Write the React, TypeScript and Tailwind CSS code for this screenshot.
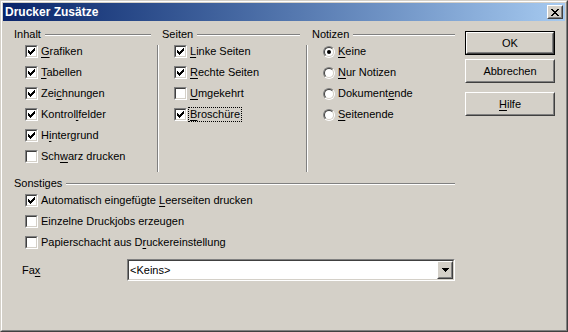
import React from 'react';

const raised =
  'border border-t-white border-l-white border-r-[#404040] border-b-[#404040]';
const raisedInner =
  'border border-t-[#d4d0c8] border-l-[#d4d0c8] border-r-[#808080] border-b-[#808080]';
const sunken =
  'border border-t-[#808080] border-l-[#808080] border-r-white border-b-white';
const sunkenInner =
  'border border-t-[#404040] border-l-[#404040] border-r-[#d4d0c8] border-b-[#d4d0c8]';

// text with one underlined accelerator letter
function Acc({ t, u }: { t: string; u?: number }) {
  if (u === undefined) return <>{t}</>;
  return (
    <>
      {t.slice(0, u)}
      <span className="underline underline-offset-[2px]">{t[u]}</span>
      {t.slice(u + 1)}
    </>
  );
}

const tick = [
  [6], [5, 6], [0, 4, 5, 6], [0, 1, 3, 4, 5], [0, 1, 2, 3, 4], [1, 2, 3], [2],
];

function CheckBox({ checked }: { checked: boolean }) {
  return (
    <span className={`block w-[13px] h-[13px] shrink-0 ${sunken}`}>
      <span className={`block w-full h-full bg-white ${sunkenInner}`}>
        {checked && (
          <svg width="9" height="9" viewBox="0 0 9 9" shapeRendering="crispEdges">
            {tick.map((xs, y) =>
              xs.map((x) => <rect key={`${x}-${y}`} x={x + 1} y={y + 1} width="1" height="1" fill="#000" />)
            )}
          </svg>
        )}
      </span>
    </span>
  );
}

function Radio({ checked }: { checked: boolean }) {
  return (
    <span className={`flex w-[12px] h-[12px] shrink-0 rounded-full ${sunken}`}>
      <span className={`flex flex-1 items-center justify-center rounded-full bg-white ${sunkenInner}`}>
        {checked && <span className="block w-[4px] h-[4px] rounded-full bg-black" />}
      </span>
    </span>
  );
}

function Row({
  kind = 'check',
  checked = false,
  label,
  u,
  focus = false,
}: {
  kind?: 'check' | 'radio';
  checked?: boolean;
  label: string;
  u?: number;
  focus?: boolean;
}) {
  return (
    <div className="h-[21px] flex items-center pl-[11px]">
      {kind === 'check' ? <CheckBox checked={checked} /> : <Radio checked={checked} />}
      <span
        className={
          focus
            ? 'ml-[2px] px-[1px] leading-[13px] outline outline-1 outline-dotted outline-black'
            : 'ml-[3px] leading-[13px]'
        }
      >
        <Acc t={label} u={u} />
      </span>
    </div>
  );
}

function GroupHead({ title, right = 0 }: { title: string; right?: number }) {
  return (
    <div className="h-[13px] flex items-center">
      <span className="leading-[13px]">{title}</span>
      <span
        className="flex-1 ml-[4px] h-[2px] border-t border-t-[#808080] border-b border-b-white"
        style={{ marginRight: right }}
      />
    </div>
  );
}

function VSep() {
  return <div className="mt-[17px] w-[2px] h-[127px] shrink-0 border-l border-l-[#808080] border-r border-r-white" />;
}

function Button({ label, u, isDefault = false, cls = '' }: { label: string; u?: number; isDefault?: boolean; cls?: string }) {
  const face = (
    <div className={`h-full ${raised}`}>
      <div className={`h-full flex items-center justify-center ${raisedInner}`}>
        <span className="leading-[13px]">
          <Acc t={label} u={u} />
        </span>
      </div>
    </div>
  );
  return (
    <div className={`w-[90px] h-[24px] ${cls} ${isDefault ? 'border border-black' : ''}`}>{face}</div>
  );
}

export default function App() {
  return (
    <div className="w-[568px] h-[332px] bg-[#d4d0c8] text-black text-[11px] font-['Liberation_Sans',Arial,sans-serif] border border-t-[#d4d0c8] border-l-[#d4d0c8] border-r-[#404040] border-b-[#404040]">
      <div className="h-full flex flex-col p-px border border-t-white border-l-white border-r-[#808080] border-b-[#808080]">
        {/* title bar */}
        <div className="h-[18px] shrink-0 flex items-center justify-between bg-gradient-to-r from-[#0a246a] to-[#a6caf0] pl-[2px] pr-[2px]">
          <span className="text-white font-bold text-[12px] leading-[14px]">Drucker Zusätze</span>
          <div className={`w-[16px] h-[14px] bg-[#d4d0c8] ${raised}`}>
            <div className={`h-full flex items-center justify-center ${raisedInner}`}>
              <svg width="8" height="7" viewBox="0 0 8 7" shapeRendering="crispEdges">
                <path d="M0 0h2v1h-2zM6 0h2v1h-2zM1 1h2v1h-2zM5 1h2v1h-2zM2 2h4v1h-4zM3 3h2v1h-2zM2 4h4v1h-4zM1 5h2v1h-2zM5 5h2v1h-2zM0 6h2v1h-2zM6 6h2v1h-2z" fill="#000" />
              </svg>
            </div>
          </div>
        </div>

        {/* body */}
        <div className="flex flex-1">
          <div className="w-[452px] pl-[11px] pt-[7px]">
            <div className="flex">
              <div className="w-[143px] shrink-0">
                <GroupHead title="Inhalt" right={6} />
                <Row checked label="Grafiken" u={0} />
                <Row checked label="Tabellen" u={0} />
                <Row checked label="Zeichnungen" u={3} />
                <Row checked label="Kontrollfelder" u={7} />
                <Row checked label="Hintergrund" u={1} />
                <Row label="Schwarz drucken" u={3} />
              </div>
              <VSep />
              <div className="w-[147px] shrink-0 pl-[3px]">
                <GroupHead title="Seiten" right={6} />
                <div className="pl-[1px]">
                  <Row checked label="Linke Seiten" u={0} />
                  <Row checked label="Rechte Seiten" u={0} />
                  <Row label="Umgekehrt" u={0} />
                  <Row checked label="Broschüre" u={0} focus />
                </div>
              </div>
              <VSep />
              <div className="flex-1 pl-[4px]">
                <GroupHead title="Notizen" />
                <Row kind="radio" checked label="Keine" u={0} />
                <Row kind="radio" label="Nur Notizen" u={0} />
                <Row kind="radio" label="Dokumentende" u={8} />
                <Row kind="radio" label="Seitenende" u={0} />
              </div>
            </div>

            <div className="mt-[5px]">
              <GroupHead title="Sonstiges" />
              <Row checked label="Automatisch eingefügte Leerseiten drucken" u={23} />
              <Row label="Einzelne Druckjobs erzeugen" />
              <Row label="Papierschacht aus Druckereinstellung" u={19} />
            </div>

            <div className="mt-[6px] flex items-center h-[22px]">
              <span className="w-[113px] shrink-0 pl-[8px] leading-[13px]">
                <Acc t="Fax" u={2} />
              </span>
              <div className={`w-[328px] h-[22px] ${sunken}`}>
                <div className={`h-full flex items-center bg-white ${sunkenInner}`}>
                  <span className="flex-1 pl-[1px] leading-[13px]">&lt;Keins&gt;</span>
                  <div className={`w-[16px] h-full bg-[#d4d0c8] ${raised}`}>
                    <div className={`h-full flex items-center justify-center ${raisedInner}`}>
                      <svg width="7" height="4" viewBox="0 0 7 4" shapeRendering="crispEdges">
                        <path d="M0 0h7v1h-7zM1 1h5v1h-5zM2 2h3v1h-3zM3 3h1v1h-1z" fill="#000" />
                      </svg>
                    </div>
                  </div>
                </div>
              </div>
            </div>
          </div>

          <div className="ml-[10px] pt-[10px] flex flex-col">
            <Button label="OK" isDefault />
            <Button label="Abbrechen" cls="mt-[4px]" />
            <Button label="Hilfe" u={0} cls="mt-[9px]" />
          </div>
        </div>
      </div>
    </div>
  );
}
